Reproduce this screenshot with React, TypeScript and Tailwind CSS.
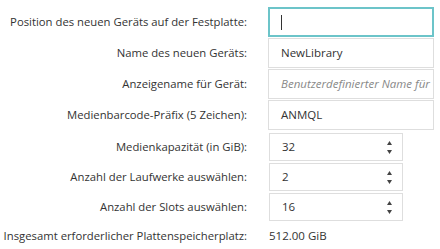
const labelCls = 'w-[247px] shrink-0 text-right whitespace-nowrap text-[11.3px] text-[#333]';

function Spinner() {
  return (
    <div className="flex flex-col items-center gap-[5px] text-[#444]">
      <svg width="5" height="4" viewBox="0 0 5 4"><path d="M2.5 0L5 4H0z" fill="currentColor" /></svg>
      <svg width="5" height="4" viewBox="0 0 5 4"><path d="M0 0h5L2.5 4z" fill="currentColor" /></svg>
    </div>
  );
}

function TextRow({ label, value, placeholder, focused }: { label: string; value?: string; placeholder?: string; focused?: boolean }) {
  return (
    <div className="flex items-center h-[30px] mb-px">
      <div className={labelCls}>{label}</div>
      <div
        className={
          'ml-[21px] w-[166px] h-[30px] flex items-center overflow-hidden whitespace-nowrap text-[11.5px] ' +
          (focused ? 'border-2 border-[#6cc4c9] pl-[11px]' : 'border border-[#dedede] pl-3')
        }
      >
        {focused && <span className="w-px h-[15px] bg-[#333]" />}
        {value && <span className="text-[#333]">{value}</span>}
        {placeholder && <span className="italic text-[#888]">{placeholder}</span>}
      </div>
    </div>
  );
}

function NumberRow({ label, value }: { label: string; value: string }) {
  return (
    <div className="flex items-center h-[28px] mb-[2px]">
      <div className={labelCls}>{label}</div>
      <div className="ml-[22px] w-[134px] h-[28px] border border-[#dedede] flex items-center justify-between pl-3 pr-[10px] text-[11.5px] text-[#333]">
        <span>{value}</span>
        <Spinner />
      </div>
    </div>
  );
}

export default function App() {
  return (
    <div className="w-[440px] h-[249px] bg-white pt-[7px] overflow-hidden" style={{ fontFamily: '"Open Sans", sans-serif' }}>
      <TextRow label="Position des neuen Geräts auf der Festplatte:" focused />
      <TextRow label="Name des neuen Geräts:" value="NewLibrary" />
      <TextRow label="Anzeigename für Gerät:" placeholder="Benutzerdefinierter Name für" />
      <TextRow label="Medienbarcode-Präfix (5 Zeichen):" value="ANMQL" />
      <div className="h-[2px]" />
      <NumberRow label="Medienkapazität (in GiB):" value="32" />
      <NumberRow label="Anzahl der Laufwerke auswählen:" value="2" />
      <NumberRow label="Anzahl der Slots auswählen:" value="16" />
      <div className="flex items-center h-[26px] mt-px">
        <div className={labelCls}>Insgesamt erforderlicher Plattenspeicherplatz:</div>
        <div className="ml-[22px] text-[11.5px] text-[#333]">512.00 GiB</div>
      </div>
    </div>
  );
}
